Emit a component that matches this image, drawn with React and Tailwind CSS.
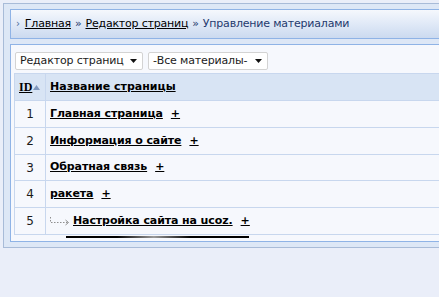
import React from "react";

const rows = [
  { id: 1, title: "Главная страница", h: "h-[27px]" },
  { id: 2, title: "Информация о сайте", h: "h-[27px]" },
  { id: 3, title: "Обратная связь", h: "h-[26px]" },
  { id: 4, title: "ракета", h: "h-[27px]" },
  { id: 5, title: "Настройка сайта на ucoz.", h: "h-[27px]", child: true },
];

function FakeSelect({ label, width }) {
  return (
    <div className={`flex items-center justify-between h-[18px] bg-white border border-[#d3d3d3] rounded-[2px] pl-[4px] pr-[5px] ${width}`}>
      <span>{label}</span>
      <svg width="7" height="4" viewBox="0 0 7 4">
        <path d="M0 0h7L3.5 4z" fill="#111" />
      </svg>
    </div>
  );
}

function ChildArrow() {
  return (
    <svg width="20" height="10" viewBox="0 0 20 10" className="shrink-0">
      <path d="M0.5 1v5.5H18" stroke="#8f8f8f" strokeDasharray="1.5 1.5" fill="none" />
      <path d="M15.5 4l3 2.5-3 2.5" stroke="#8f8f8f" fill="none" />
    </svg>
  );
}

export default function App() {
  return (
    <div className="w-[439px] h-[297px] overflow-hidden bg-[#eaeef9] pt-[3px] pl-[3px] text-[11px] text-[#1b1b1b] font-['DejaVu_Sans',sans-serif]">
      <div className="w-[480px] border border-[#a8bbd8] bg-[#dde7f6] pt-[5px] pl-[6px] pb-[5px]">
        {/* breadcrumb */}
        <div className="h-[30px] border border-[#8fb3e6] bg-gradient-to-b from-[#f5f8fd] to-[#cbdaf0] flex items-center pl-[5px] tracking-[-0.2px]">
          <span className="text-[#4a6a9c] text-[10px] mr-[5px] leading-none">›</span>
          <a className="underline text-black">Главная</a>
          <span className="text-[#1f3a6e] mx-[4px]">»</span>
          <a className="underline text-black">Редактор страниц</a>
          <span className="text-[#1f3a6e] mx-[4px]">»</span>
          <span className="text-[#1f3a6e]">Управление материалами</span>
        </div>

        {/* content */}
        <div className="mt-[5px] border border-[#8fb3e6] bg-[#f6f8fd] pt-[7px] pl-[3px] pb-[3px]">
          <div className="flex gap-[5px] ml-[1px] tracking-[-0.15px]">
            <FakeSelect label="Редактор страниц" width="w-[128px]" />
            <FakeSelect label="-Все материалы-" width="w-[120px]" />
          </div>

          <table className="mt-[3px] w-[470px] border-collapse">
            <thead>
              <tr className="h-[27px] bg-[#d8e4f4]">
                <th className="w-[31px] border border-[#c8d7ee] text-left pl-[4px] font-normal">
                  <span className="inline-flex items-center">
                    <span className="underline font-bold text-[12px] font-['Liberation_Serif',serif] text-black">ID</span>
                    <svg width="7" height="5" viewBox="0 0 7 5" className="ml-[1px] mt-[2px]">
                      <path d="M0 5h7L3.5 0z" fill="#7f97bd" />
                    </svg>
                  </span>
                </th>
                <th className="border border-[#c8d7ee] text-left pl-[4px]">
                  <span className="underline font-bold text-black">Название страницы</span>
                </th>
              </tr>
            </thead>
            <tbody>
              {rows.map((r) => (
                <tr key={r.id} className={r.h}>
                  <td className="border border-[#c8d7ee] text-center text-[12px]">{r.id}</td>
                  <td className="border border-[#c8d7ee] pl-[4px]">
                    <span className="flex items-center">
                      {r.child && <ChildArrow />}
                      <a className={`underline font-bold text-black tracking-[-0.1px] ${r.child ? "ml-[3px]" : ""}`}>{r.title}</a>
                      <a className="underline font-bold text-black ml-[8px]">+</a>
                    </span>
                  </td>
                </tr>
              ))}
            </tbody>
          </table>

          <div className="mt-[1px] ml-[52px] w-[183px] h-[2px] bg-[linear-gradient(to_right,#000_0%,#000_28%,#9a9a9a_48%,#000_68%,#000_100%)]" />
        </div>
      </div>
    </div>
  );
}
